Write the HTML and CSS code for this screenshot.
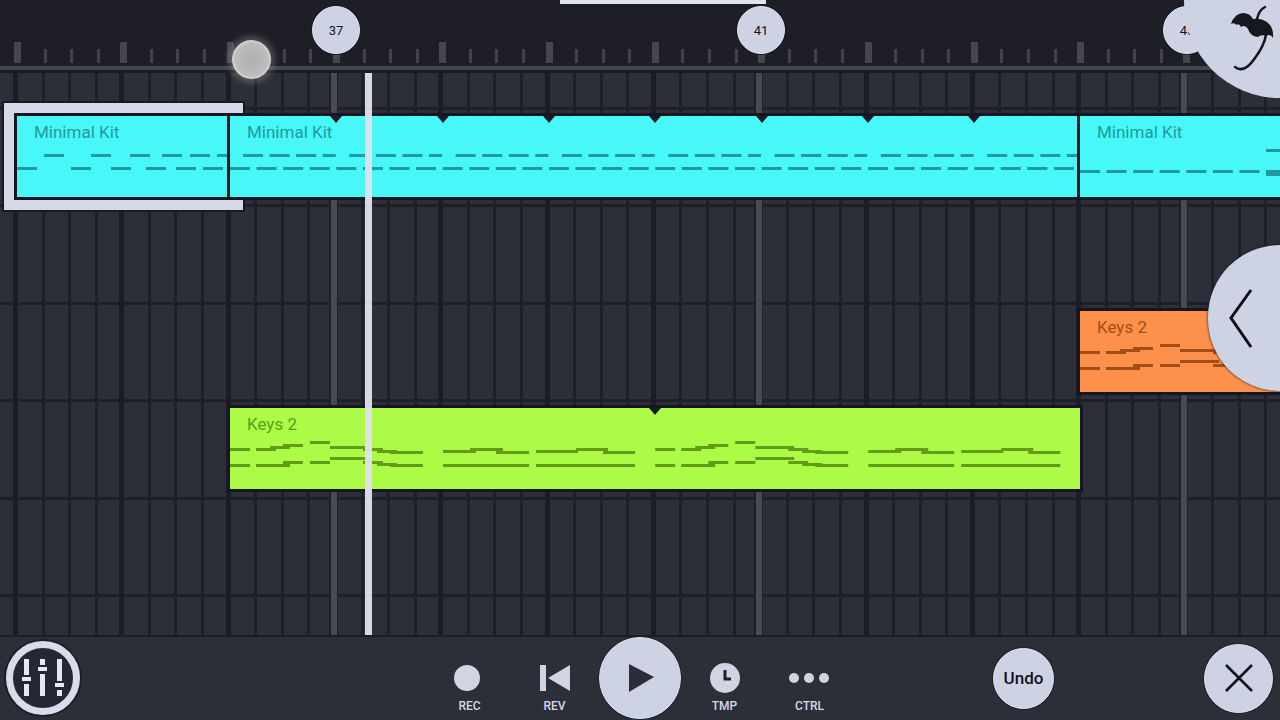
FILE: index.html
```
<!DOCTYPE html>
<html lang="en">
<head>
<meta charset="utf-8">
<title>Playlist</title>
<link rel="stylesheet" href="styles.css">
</head>
<body>
<main class="timeline">
    <header class="ruler">
        <svg class="ticks" id="ticks"></svg>
        <button class="marker bar-37">37</button>
        <button class="marker bar-41">41</button>
        <button class="marker bar-45">45</button>
        <div class="scroll-thumb"></div>
    </header>
    <section class="playlist">
        <svg class="grid" id="grid"></svg>
        <div class="selection"></div>
        <article class="clip cyan drums-1">
            <h2>Minimal Kit</h2>
            <svg class="notes" data-pattern="intro"></svg>
        </article>
        <article class="clip cyan drums-2">
            <h2>Minimal Kit</h2>
            <svg class="notes" data-pattern="beat"></svg>
        </article>
        <article class="clip cyan drums-3">
            <h2>Minimal Kit</h2>
            <svg class="notes" data-pattern="outro"></svg>
        </article>
        <article class="clip orange keys-1">
            <h2>Keys 2</h2>
            <svg class="notes" data-pattern="keys"></svg>
        </article>
        <article class="clip green keys-2">
            <h2>Keys 2</h2>
            <svg class="notes" data-pattern="keys"></svg>
        </article>
        <div class="playhead"></div>
    </section>
    <div class="touch"></div>
    <button class="corner" aria-label="Snap">
        <svg width="96" height="98" viewBox="0 0 96 98">
            <path d="M47 24Q50 14 59 13Q66 13 69 19Q73 18 79 20Q90 24 89 38Q86 33 82 36Q77 34 74 37Q66 36 64 29Q61 24 57 27Q55 23 53 25Q50 22 47 24z" fill="#16171f"/>
            <path d="M81 7Q75 10 73 19M82 35Q80 46 71 58Q60 74 51 67" fill="none" stroke="#16171f" stroke-width="2.5" stroke-linecap="round"/>
        </svg>
    </button>
    <button class="drawer" aria-label="Open panel">
        <svg width="72" height="146" viewBox="0 0 72 146">
            <path d="M43 45L23 73L43 102" fill="none" stroke="#0c0d16" stroke-width="3"/>
        </svg>
    </button>
</main>
<footer class="toolbar">
    <button class="mixer" aria-label="Mixer">
        <svg width="40" height="40" viewBox="0 0 40 40" fill="#e6e9f4">
            <path d="M1 1h5v16h-5zM-1 19h9v4h-9zM1 26h5v12h-5zM17 1h5v6h-5zM15 9h9v4h-9zM17 16h5v22h-5zM34 1h5v22h-5zM32 25h9v4h-9zM34 32h5v6h-5z"/>
        </svg>
    </button>
    <nav class="transport">
        <button class="control">
            <svg width="34" height="30" viewBox="0 0 34 30"><circle cx="14" cy="15" r="13"/></svg>
            REC
        </button>
        <button class="control">
            <svg width="34" height="30" viewBox="0 0 34 30"><path d="M2 2h6v26h-6zM32 2v26L10 15z"/></svg>
            REV
        </button>
        <button class="play" aria-label="Play">
            <svg width="30" height="30" viewBox="0 0 30 30"><path d="M4 1L29 14L4 29z" fill="#2b2e38"/></svg>
        </button>
        <button class="control">
            <svg width="34" height="30" viewBox="0 0 34 30"><circle cx="17" cy="15" r="15"/><path d="M17 7v9h6" fill="none" stroke="#1d1f2a" stroke-width="3"/></svg>
            TMP
        </button>
        <button class="control">
            <svg width="42" height="30" viewBox="0 0 42 30"><circle cx="5" cy="15" r="5"/><circle cx="20" cy="15" r="5"/><circle cx="35" cy="15" r="5"/></svg>
            CTRL
        </button>
    </nav>
    <div class="actions">
        <button class="undo">Undo</button>
        <button class="close" aria-label="Close">
            <svg width="30" height="30" viewBox="0 0 30 30"><path d="M2 2L28 28M28 2L2 28" stroke="#0c0d16" stroke-width="2.5"/></svg>
        </button>
    </div>
</footer>
<script src="playlist.js"></script>
</body>
</html>
```

FILE: styles.css
```
* {
    box-sizing: border-box;
}

body {
    display: flex;
    flex-direction: column;
    height: 100vh;
    margin: 0;
    overflow: hidden;
    background: #2c2f38;
    font-family: Roboto, "Liberation Sans", sans-serif;
}

button {
    display: flex;
    align-items: center;
    justify-content: center;
    margin: 0;
    padding: 0;
    border: none;
    background: #ced3e3;
    color: #11121b;
    font-family: inherit;
    cursor: pointer;
}

svg {
    display: block;
}

.timeline {
    position: relative;
    display: flex;
    flex: 1;
    flex-direction: column;
    overflow: hidden;
}

.ruler {
    position: relative;
    height: 73px;
    border-bottom: 3px solid #191a24;
    background: #1e1e27;
}

.ticks,
.grid {
    width: 100%;
    height: 100%;
}

.marker {
    position: absolute;
    top: 6px;
    width: 48px;
    height: 48px;
    border: 1px solid #e0e4f0;
    border-radius: 50%;
    box-shadow: 0 0 0 1px #181923;
    font-size: 13px;
    font-weight: 400;
}

.bar-37 {
    left: 312px;
}

.bar-41 {
    left: 737px;
}

.bar-45 {
    left: 1163px;
}

.scroll-thumb {
    position: absolute;
    top: 0;
    left: 560px;
    width: 206px;
    height: 4px;
    background: #e0e3ef;
}

.playlist {
    position: relative;
    flex: 1;
    border-bottom: 2px solid #1c1d28;
    overflow: hidden;
}

.selection {
    position: absolute;
    top: 30px;
    left: 4px;
    width: 239px;
    height: 107px;
    border: 10px solid #d6d9e8;
    border-right: none;
    box-shadow: 0 0 0 2px #181923;
}

.clip {
    position: absolute;
    height: 81px;
    padding: 6px 0 0 17px;
    box-shadow: 0 0 0 3px #151620;
    overflow: hidden;
}

.clip h2 {
    margin: 0;
    font-size: 17px;
    font-weight: 400;
    line-height: 20px;
}

.notes {
    position: absolute;
    top: 0;
    left: 0;
    width: 100%;
    height: 100%;
    fill: currentColor;
}

.cyan {
    top: 43px;
    background: #48f7f7;
    color: #209a9e;
}

.orange {
    background: #fd914b;
    color: #a34e18;
}

.green {
    background: #adfb47;
    color: #629c18;
}

.drums-1 {
    left: 17px;
    width: 210px;
}

.drums-2 {
    left: 230px;
    width: 847px;
}

.drums-3 {
    left: 1080px;
    right: 0;
}

.keys-1 {
    top: 238px;
    left: 1080px;
    right: 0;
}

.keys-2 {
    top: 335px;
    left: 230px;
    width: 850px;
}

.playhead {
    position: absolute;
    top: 0;
    bottom: 0;
    left: 365px;
    width: 7px;
    background: rgba(226, 226, 240, 0.95);
}

.touch {
    position: absolute;
    top: 40px;
    left: 232px;
    width: 39px;
    height: 39px;
    border: 2px solid #cfcfcf;
    border-radius: 50%;
    background: radial-gradient(#aeb0af, #c3c4c3);
    box-shadow: 0 0 6px 4px rgba(150, 150, 150, 0.4);
}

.corner {
    position: absolute;
    top: 0;
    right: 0;
    width: 96px;
    height: 98px;
    border-bottom-left-radius: 96px;
}

.drawer {
    position: absolute;
    top: 245px;
    right: 0;
    width: 72px;
    height: 146px;
    border-radius: 73px 0 0 73px;
    box-shadow: 0 0 3px #181923;
}

.toolbar {
    display: grid;
    grid-template-columns: 1fr auto 1fr;
    align-items: center;
    height: 83px;
    padding: 0 7px 1px 6px;
}

.mixer {
    width: 74px;
    height: 74px;
    border: 7px solid #d9dcea;
    border-radius: 50%;
    background: #252834;
    box-shadow: 0 0 0 2px #1c1e29;
}

.mixer svg {
    overflow: visible;
}

.transport {
    display: flex;
    gap: 3px;
}

.control {
    flex-direction: column;
    gap: 5px;
    width: 82px;
    padding-top: 21px;
    background: none;
    color: #d5d9e8;
    font-size: 12px;
    font-weight: 500;
    line-height: 16px;
}

.control svg {
    fill: #d0d4e3;
}

.play {
    width: 82px;
    height: 82px;
    border: 1px solid #e0e4f0;
    border-radius: 50%;
    box-shadow: 0 0 0 1px #20222d;
}

.actions {
    display: flex;
    align-items: center;
    justify-content: flex-end;
    gap: 150px;
}

.undo,
.close {
    border: 1px solid #e0e4f0;
    border-radius: 50%;
    box-shadow: 0 0 0 1px #1c1e29;
}

.undo {
    width: 61px;
    height: 61px;
    font-size: 17px;
    font-weight: 500;
}

.close {
    width: 69px;
    height: 69px;
}
```

FILE: playlist.js
```
var BAR = 850.5 / 8;
var BEAT = BAR / 4;
var LANE = 97.4;

function rect(svg, x, y, width, height, fill) {
    var node = document.createElementNS('http://www.w3.org/2000/svg', 'rect');
    node.setAttribute('x', x);
    node.setAttribute('y', y);
    node.setAttribute('width', width);
    node.setAttribute('height', height);
    if (fill) node.setAttribute('fill', fill);
    svg.appendChild(node);
}

function drawTicks(svg) {
    for (var i = 0; i * BEAT < window.innerWidth; i++) {
        var x = Math.round(14 + i * BEAT);
        if (i % 4 == 0) {
            rect(svg, x, 42, 7, 21, '#46464e');
        } else {
            rect(svg, x + 3, 49, 3, 14, '#42424b');
        }
    }
    rect(svg, 0, 66, window.innerWidth, 4, '#44454c');
}

function drawGrid(svg) {
    var w = window.innerWidth;
    var h = window.innerHeight;
    for (var n = 0; n * LANE < h; n++) {
        rect(svg, 0, Math.round(34 + n * LANE), w, 3, '#1e1f2a');
    }
    for (var i = 0; i * BEAT < w; i++) {
        var x = Math.round(13 + i * BEAT);
        if (i % 16 == 12) {
            // every fourth bar gets the light line
            rect(svg, x - 3, 0, 9, h, '#1e1f2a');
            rect(svg, x - 1, 0, 6, h, '#484a53');
        } else if (i % 4 == 0) {
            rect(svg, x, 0, 5, h, '#1b1c27');
        } else {
            rect(svg, x + 2, 0, 3, h, '#1e1f2a');
        }
    }
}

// [start, length, y]
var KEYS = [
    [0, 20, 40], [26, 20, 40], [40, 20, 38], [53, 20, 36], [80, 20, 33],
    [100, 39, 38], [133, 20, 40], [147, 20, 42], [160, 33, 43],
    [213, 33, 42], [240, 33, 40], [266, 33, 43],
    [306, 42, 42], [346, 32, 40], [373, 32, 43],
    [0, 20, 56], [26, 34, 56], [53, 20, 53], [80, 20, 53], [100, 39, 49],
    [133, 20, 53], [147, 20, 55], [160, 33, 56], [213, 86, 56], [306, 99, 56]
];

var INTRO = [
    [27, 20, 38], [74, 20, 38], [113, 20, 38], [145, 20, 38], [173, 20, 38], [200, 20, 38],
    [0, 20, 51], [54, 20, 51], [94, 20, 51], [129, 20, 51], [159, 20, 51], [186, 20, 51]
];

function drawNotes(svg, notes, offset) {
    notes.forEach(function (n) {
        rect(svg, n[0] + offset, n[2], n[1], 3);
    });
}

function drawNotch(svg, x) {
    var node = document.createElementNS('http://www.w3.org/2000/svg', 'path');
    node.setAttribute('d', 'M' + (x - 6) + ' 0h12l-6 7z');
    node.setAttribute('fill', '#1a1b26');
    svg.appendChild(node);
}

var patterns = {
    intro: function (svg) {
        drawNotes(svg, INTRO, 0);
    },
    beat: function (svg) {
        for (var i = 0; i < 32; i++) {
            rect(svg, i * BEAT, 51, 20, 3);
            rect(svg, i * BEAT + 13, 38, i % 4 == 3 ? 13 : 20, 3);
        }
        for (var b = 1; b < 8; b++) {
            drawNotch(svg, Math.round(b * BAR));
        }
    },
    outro: function (svg) {
        for (var i = 0; i < 7; i++) {
            rect(svg, i * BEAT, 54, 20, 3);
        }
        rect(svg, 7 * BEAT, 33, 20, 3);
        rect(svg, 7 * BEAT, 54, 20, 6);
    },
    keys: function (svg) {
        drawNotes(svg, KEYS, 0);
        drawNotes(svg, KEYS, 4 * BAR);
        drawNotch(svg, Math.round(4 * BAR));
    }
};

drawTicks(document.getElementById('ticks'));
drawGrid(document.getElementById('grid'));
document.querySelectorAll('.notes').forEach(function (svg) {
    patterns[svg.dataset.pattern](svg);
});
```
